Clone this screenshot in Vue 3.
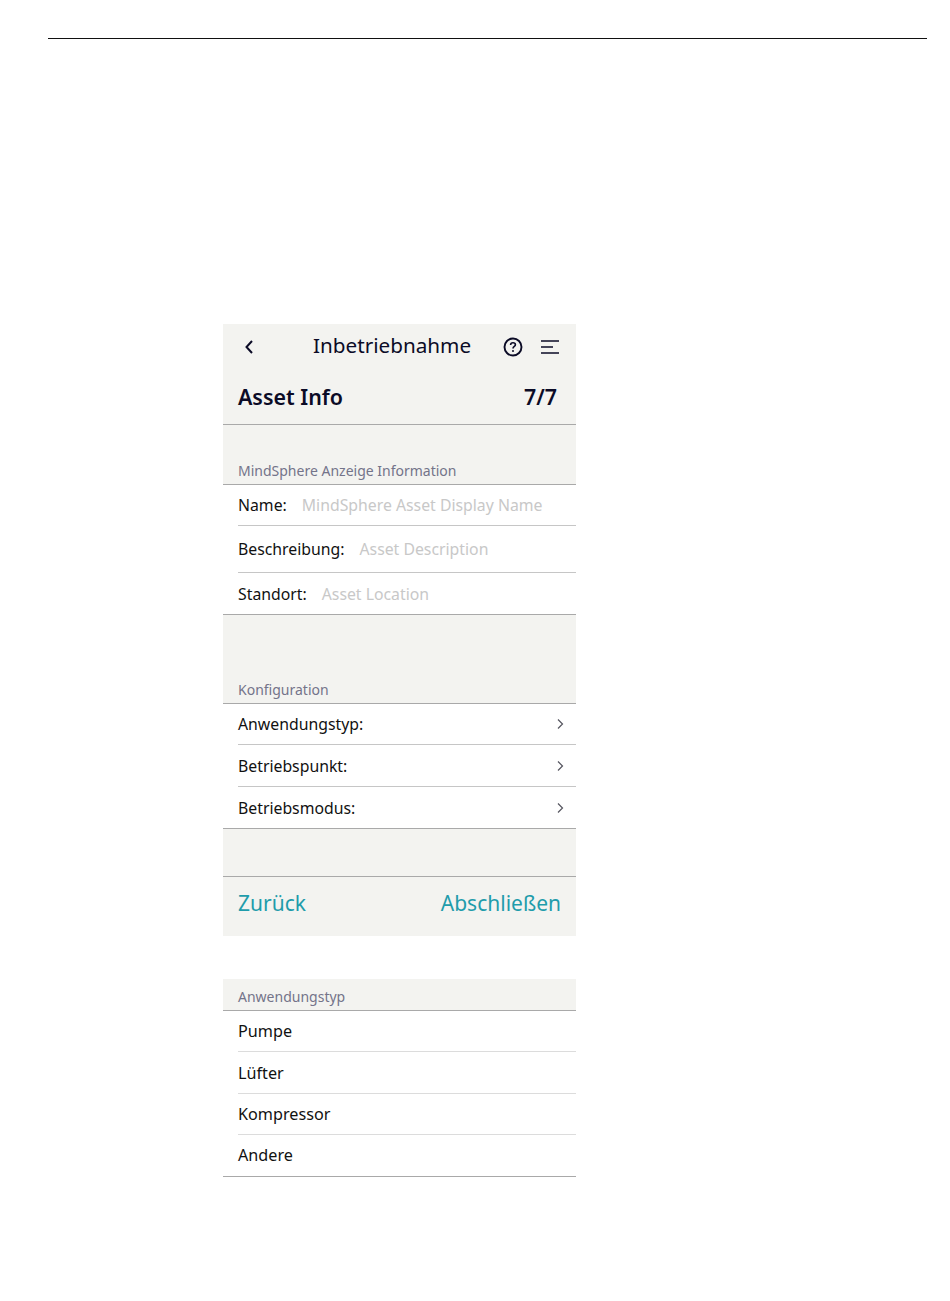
<script setup>
const infoRows = [
  { label: 'Name:', hint: 'MindSphere Asset Display Name', cls: 'h40' },
  { label: 'Beschreibung:', hint: 'Asset Description', cls: 'h46' },
  { label: 'Standort:', hint: 'Asset Location', cls: 'h41' },
];
const configRows = [
  { label: 'Anwendungstyp:', cls: 'h40' },
  { label: 'Betriebspunkt:', cls: 'h41' },
  { label: 'Betriebsmodus:', cls: 'h41' },
];
const typeRows = [
  { label: 'Pumpe', cls: 'h40' },
  { label: 'Lüfter', cls: 'h41' },
  { label: 'Kompressor', cls: 'h40' },
  { label: 'Andere', cls: 'h41' },
];
</script>

<template>
  <div class="page">
    <div class="top-rule"></div>

    <section class="panel first">
      <header class="nav">
        <button class="icon-btn back" aria-label="Zurück">
          <svg width="10" height="16" viewBox="0 0 10 16">
            <path d="M8 2 L2.5 8 L8 14" fill="none" stroke="#0b0b26" stroke-width="2" />
          </svg>
        </button>
        <span class="nav-title">Inbetriebnahme</span>
        <svg class="help" width="20" height="20" viewBox="0 0 20 20">
          <circle cx="10" cy="10" r="8.5" fill="none" stroke="#0b0b26" stroke-width="1.9" />
          <path d="M7.6 8 C7.6 6.5 8.7 5.8 10 5.8 C11.4 5.8 12.4 6.6 12.4 7.8 C12.4 9.4 10 9.4 10 11.4" fill="none" stroke="#0b0b26" stroke-width="1.6" />
          <circle cx="10" cy="14" r="1" fill="#0b0b26" />
        </svg>
        <svg class="menu" width="18" height="14" viewBox="0 0 18 14">
          <path d="M0 1 H18 M0 7 H12 M0 13 H18" fill="none" stroke="#0b0b26" stroke-width="1.7" />
        </svg>
      </header>

      <div class="step">
        <h1>Asset Info</h1>
        <span class="count">7/7</span>
      </div>

      <div class="caption info-caption">MindSphere Anzeige Information</div>
      <ul class="list">
        <li v-for="row in infoRows" :key="row.label" :class="row.cls">
          <div class="row-inner">
            <span class="label">{{ row.label }}</span>
            <span class="hint">{{ row.hint }}</span>
          </div>
        </li>
      </ul>

      <div class="caption config-caption">Konfiguration</div>
      <ul class="list">
        <li v-for="row in configRows" :key="row.label" :class="row.cls">
          <div class="row-inner">
            <span class="label">{{ row.label }}</span>
            <svg class="chevron" width="8" height="12" viewBox="0 0 8 12">
              <path d="M2 1.5 L6.5 6 L2 10.5" fill="none" stroke="#55555f" stroke-width="1.2" />
            </svg>
          </div>
        </li>
      </ul>

      <div class="spacer"></div>
      <footer class="actions">
        <a>Zurück</a>
        <a>Abschließen</a>
      </footer>
    </section>

    <section class="panel second">
      <div class="caption type-caption">Anwendungstyp</div>
      <ul class="list light">
        <li v-for="row in typeRows" :key="row.label" :class="row.cls">
          <div class="row-inner">
            <span class="label">{{ row.label }}</span>
          </div>
        </li>
      </ul>
    </section>
  </div>
</template>

<style>
body {
  background: #fff;
}
</style>

<style scoped>
.page {
  height: 1301px;
  overflow: hidden;
  background: #fff;
  font-family: "Noto Sans", "Open Sans", sans-serif;
  padding-top: 38px;
  box-sizing: border-box;
}

.top-rule {
  height: 1px;
  width: 879px;
  margin-left: 48px;
  background: #111;
}

.panel {
  width: 353px;
  margin-left: 223px;
  background: #f3f3f0;
}

.first {
  margin-top: 285px;
}

.second {
  margin-top: 43px;
}

.nav {
  height: 45px;
  display: flex;
  align-items: center;
  color: #0b0b26;
}

.icon-btn {
  border: none;
  background: none;
  padding: 0;
  margin-left: 21px;
  display: flex;
}

.nav-title {
  font-size: 20.7px;
  margin-left: 59px;
  width: 191px;
  padding-bottom: 3px;
  white-space: nowrap;
}

.help {
  margin-left: -1px;
}

.menu {
  margin-left: 18px;
}

.step {
  height: 56px;
  padding: 0 19px 0 15px;
  box-sizing: border-box;
  display: flex;
  align-items: center;
  justify-content: space-between;
  border-bottom: 1px solid #a9a9a9;
  color: #0b0b26;
  font-size: 21.4px;
  font-weight: 600;
}

.step h1 {
  margin: 0;
  font: inherit;
}

.caption {
  display: flex;
  align-items: flex-end;
  padding: 0 15px 4px;
  box-sizing: border-box;
  font-size: 14px;
  line-height: 18px;
  color: #74748a;
  border-bottom: 1px solid #a9a9a9;
}

.info-caption {
  height: 60px;
}

.config-caption {
  height: 89px;
}

.type-caption {
  height: 32px;
}

.list {
  list-style: none;
  margin: 0;
  padding: 0;
  background: #fff;
  border-bottom: 1px solid #a9a9a9;
}

.list li {
  padding-left: 15px;
  box-sizing: border-box;
}

.list .h40 { height: 41px; }
.list .h41 { height: 42px; }
.list .h46 { height: 47px; }
.list li:last-child { height: 41px; }

.row-inner {
  height: 100%;
  box-sizing: border-box;
  display: flex;
  align-items: center;
  padding-right: 12px;
  border-bottom: 1px solid #c6c6c6;
  font-size: 15.8px;
  color: #111;
}

.light .row-inner {
  border-bottom-color: #dcdcdc;
  font-size: 16.2px;
}

.light li:last-child .label {
  margin-bottom: 2px;
}

.list li:last-child .row-inner {
  border-bottom: none;
}

.label {
  white-space: nowrap;
}

.hint {
  margin-left: 15px;
  color: #c8c8c8;
  white-space: nowrap;
}

.chevron {
  margin-left: auto;
}

.spacer {
  height: 47px;
}

.actions {
  height: 60px;
  box-sizing: border-box;
  border-top: 1px solid #a9a9a9;
  padding: 0 15px 8px;
  display: flex;
  align-items: center;
  justify-content: space-between;
  font-size: 21px;
  color: #1f9cab;
}
</style>
